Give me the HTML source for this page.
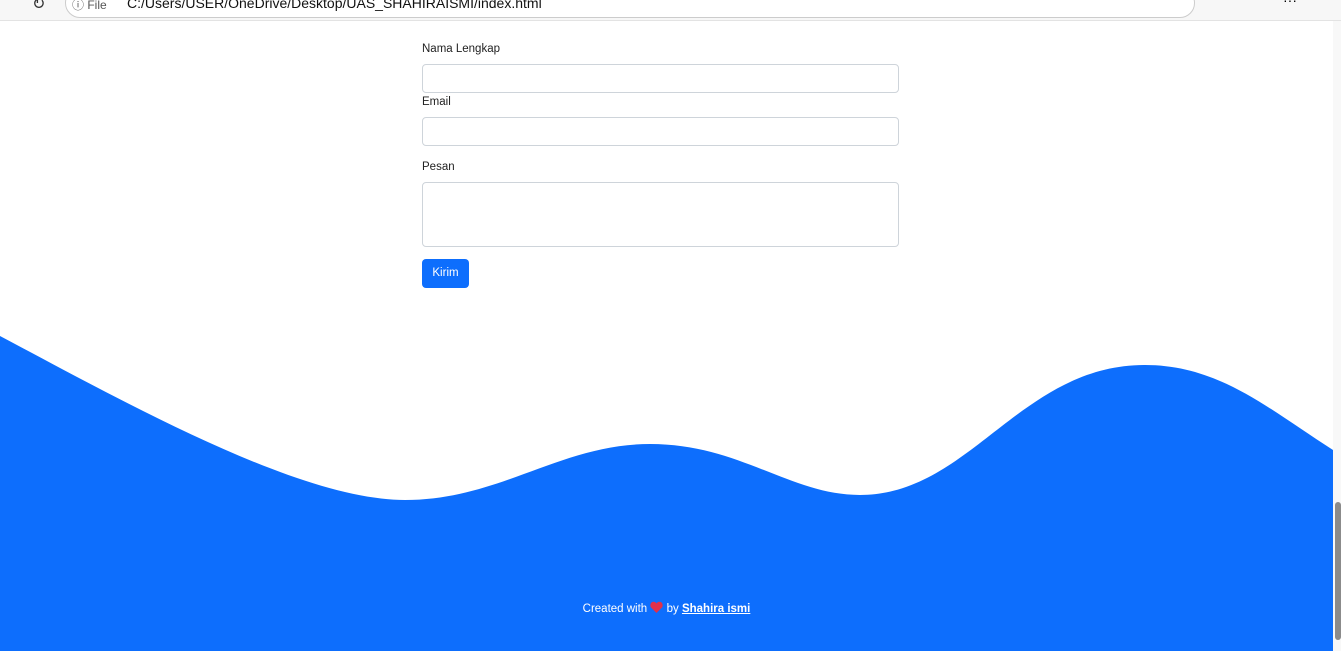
<!DOCTYPE html>
<html><head><style>
*{margin:0;padding:0;box-sizing:border-box}
body{width:1341px;height:651px;overflow:hidden;background:#fff;font-family:"Liberation Sans",sans-serif;position:relative}
.bar{position:absolute;left:0;top:0;width:1341px;height:21px;background:#f7f7f7;border-bottom:1px solid #e3e3e3}
.url{position:absolute;left:65px;top:-12px;width:1130px;height:30px;border:1px solid #ccc;border-radius:15px;background:#fff}
.file{position:absolute;left:72px;top:-4px;font-size:12px;color:#555}
.path{position:absolute;left:127px;top:-5px;font-size:14px;color:#111}
label{position:absolute;left:422px;font-size:11.5px;color:#222}
.in{position:absolute;left:422px;width:477px;border:1px solid #ced4da;border-radius:4px;background:#fff}
.btn{position:absolute;left:422px;top:259px;width:47px;height:29px;background:#0d6efd;color:#fff;font-size:11.5px;border-radius:4px;text-align:center;line-height:29px}
.sb{position:absolute;left:1333px;top:21px;width:8px;height:630px;background:#f8f8f8}
.th{position:absolute;left:1335px;top:502px;width:6px;height:138px;background:#8b8b8b;border-radius:3px}
.foot{position:absolute;top:601px;left:0;width:1333px;text-align:center;color:#fff;font-size:11.5px}
.foot b{text-decoration:underline}
</style></head><body>
<div class="bar"><div class="url"></div><span class="file">ⓘ File</span><span class="path">C:/Users/USER/OneDrive/Desktop/UAS_SHAHIRAISMI/index.html</span>
<span style="position:absolute;left:32px;top:-6px;font-size:16px;color:#333">↻</span>
<span style="position:absolute;left:1283px;top:-8px;font-size:14px">···</span></div>
<label style="top:43px">Nama Lengkap</label>
<div class="in" style="top:64px;height:29px"></div>
<label style="top:96px">Email</label>
<div class="in" style="top:117px;height:29px"></div>
<label style="top:161px">Pesan</label>
<div class="in" style="top:182px;height:65px"></div>
<div class="btn">Kirim</div>
<svg style="position:absolute;left:0;top:0" width="1333" height="651">
<path fill="#0d6efd" d="M0,336 C130,405 300,500 405,500 C500,500 560,444 650,444 C740,444 790,495 860,495 C970,495 1020,365 1145,365 C1220,365 1270,410 1333,450 L1333,651 L0,651 Z"/>
</svg>
<div class="foot">Created with <svg width="13" height="12" viewBox="0 0 16 15" style="vertical-align:-1px"><path fill="#e0304a" d="M8 15 L1.5 8.5 C-0.5 6.5 0 2 3.5 1 C5.5 0.5 7 1.5 8 3 C9 1.5 10.5 0.5 12.5 1 C16 2 16.5 6.5 14.5 8.5 Z"/></svg> by <b>Shahira ismi</b></div>
<div class="sb"></div><div class="th"></div>
</body></html>
